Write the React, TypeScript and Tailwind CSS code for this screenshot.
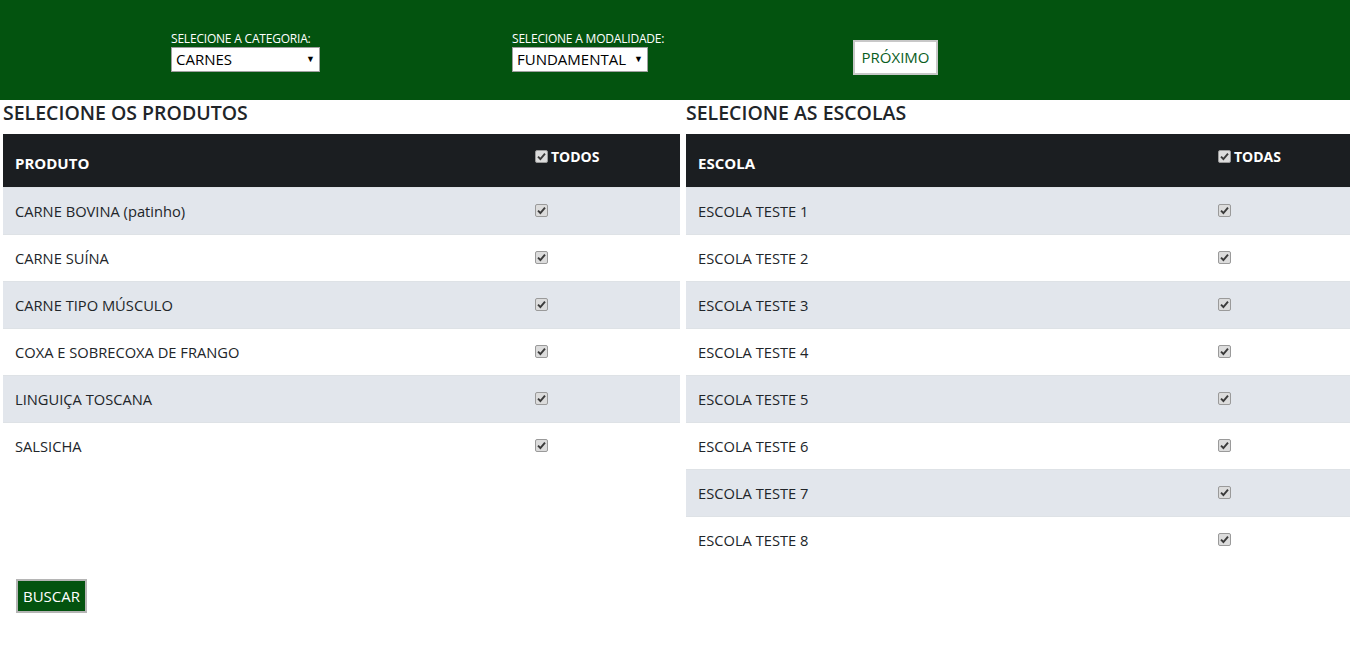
import { useState } from "react";

type Row = {
  name: string;
  checked: boolean;
};

const produtosIniciais: Row[] = [
  { name: "CARNE BOVINA (patinho)", checked: true },
  { name: "CARNE SUÍNA", checked: true },
  { name: "CARNE TIPO MÚSCULO", checked: true },
  { name: "COXA E SOBRECOXA DE FRANGO", checked: true },
  { name: "LINGUIÇA TOSCANA", checked: true },
  { name: "SALSICHA", checked: true },
];

const escolasIniciais: Row[] = [1, 2, 3, 4, 5, 6, 7, 8].map((n) => ({
  name: "ESCOLA TESTE " + n,
  checked: true,
}));

function Check({ checked, onClick }: { checked: boolean; onClick?: () => void }) {
  return (
    <span
      onClick={onClick}
      className="flex h-[13px] w-[13px] shrink-0 cursor-pointer items-center justify-center rounded-[2px] border border-[#9a9a9a] bg-[#dcdcdc]"
    >
      {checked && (
        <svg width="9" height="9" viewBox="0 0 9 9">
          <path d="M1 4.6 L3.4 7 L8 1.6" fill="none" stroke="#3a3a3a" strokeWidth="1.9" />
        </svg>
      )}
    </span>
  );
}

function Tabela({
  titulo,
  coluna,
  todos,
  rows,
  setRows,
}: {
  titulo: string;
  coluna: string;
  todos: string;
  rows: Row[];
  setRows: React.Dispatch<React.SetStateAction<Row[]>>;
}) {
  const all = rows.every((r) => r.checked);

  function toggle(index: number) {
    setRows(rows.map((r, i) => (i === index ? { ...r, checked: !r.checked } : r)));
  }

  function toggleAll() {
    setRows(rows.map((r) => ({ ...r, checked: !all })));
  }

  return (
    <div>
      <h2 className="h-[34px] text-[19.5px] font-semibold leading-[26px] text-[#212529]">
        {titulo}
      </h2>

      <div className="flex h-[53px] bg-[#1b1e21] text-[15px] font-bold text-white">
        <div className="flex w-[520px] items-end px-3 pb-[13px]">{coluna}</div>
        <div className="flex items-start gap-[3px] pt-[16px] pl-3">
          <Check checked={all} onClick={toggleAll} />
          <span className="-mt-[1px] text-[14px] leading-[15px]">{todos}</span>
        </div>
      </div>

      {rows.map((row, index) => (
        <div
          key={index}
          className={
            "flex h-[47px] items-center border-t border-[#dee2e6] text-[14.7px] text-[#212529] " +
            (index % 2 === 0 ? "bg-[#e2e6ec]" : "bg-white")
          }
        >
          <div className="w-[520px] px-3">{row.name}</div>
          <div className="flex pl-3 pb-[2px]">
            <Check checked={row.checked} onClick={() => toggle(index)} />
          </div>
        </div>
      ))}
    </div>
  );
}

export default function App() {
  const [categoria, setCategoria] = useState("CARNES");
  const [modalidade, setModalidade] = useState("FUNDAMENTAL");
  const [produtos, setProdutos] = useState<Row[]>(produtosIniciais);
  const [escolas, setEscolas] = useState<Row[]>(escolasIniciais);

  return (
    <div className="min-h-[653px] bg-white font-['Open_Sans',sans-serif]">
      {/* cabeçalho */}
      <div className="flex h-[100px] items-start bg-[#03530f] pl-[171px] pt-[31px]">
        <div className="w-[341px]">
          <div className="text-[12px] leading-[16px] tracking-[-0.2px] text-white">
            SELECIONE A CATEGORIA:
          </div>
          <div className="relative h-[25px] w-[149px]">
            <select
              value={categoria}
              onChange={(e) => setCategoria(e.target.value)}
              className="h-full w-full appearance-none border border-[#a0a0a0] bg-white pl-[4px] text-[15px] text-black outline-none"
            >
              <option>CARNES</option>
              <option>HORTIFRUTI</option>
              <option>LATICÍNIOS</option>
            </select>
            <span className="pointer-events-none absolute right-[5px] top-[5px] text-[9px] text-black">▼</span>
          </div>
        </div>

        <div className="w-[341px]">
          <div className="text-[12px] leading-[16px] tracking-[-0.2px] text-white">
            SELECIONE A MODALIDADE:
          </div>
          <div className="relative h-[25px] w-[136px]">
            <select
              value={modalidade}
              onChange={(e) => setModalidade(e.target.value)}
              className="h-full w-full appearance-none border border-[#a0a0a0] bg-white pl-[4px] text-[15px] text-black outline-none"
            >
              <option>FUNDAMENTAL</option>
              <option>INFANTIL</option>
              <option>EJA</option>
            </select>
            <span className="pointer-events-none absolute right-[5px] top-[5px] text-[9px] text-black">▼</span>
          </div>
        </div>

        <button
          type="button"
          className="mt-[9px] h-[35px] w-[85px] border-2 border-[#c8c8c8] bg-white text-[15px] text-[#0b5d1e]"
        >
          PRÓXIMO
        </button>
      </div>

      <div className="flex gap-[6px] pl-[3px]">
        <div className="w-[677px]">
          <Tabela
            titulo="SELECIONE OS PRODUTOS"
            coluna="PRODUTO"
            todos="TODOS"
            rows={produtos}
            setRows={setProdutos}
          />

          <button
            type="button"
            className="ml-[13px] mt-[110px] h-[34px] w-[71px] border-2 border-[#b5b5b5] bg-[#03530f] text-[15px] text-white"
          >
            BUSCAR
          </button>
        </div>

        <div className="flex-1">
          <Tabela
            titulo="SELECIONE AS ESCOLAS"
            coluna="ESCOLA"
            todos="TODAS"
            rows={escolas}
            setRows={setEscolas}
          />
        </div>
      </div>
    </div>
  );
}
